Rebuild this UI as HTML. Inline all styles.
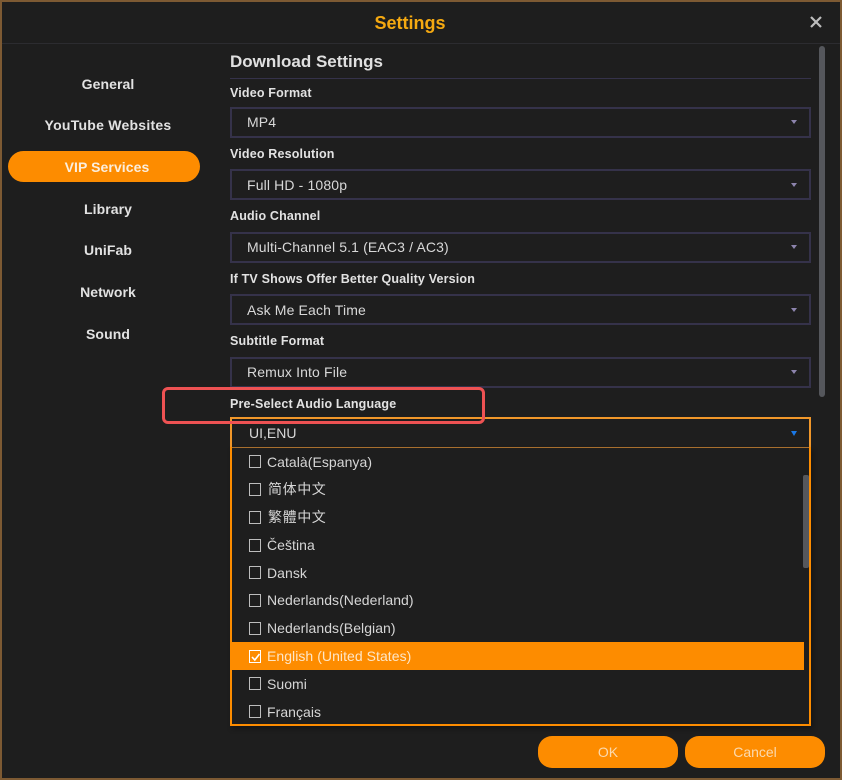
<!DOCTYPE html>
<html><head><meta charset="utf-8">
<style>
html,body{margin:0;padding:0;background:#1e1e1e}
body{width:842px;height:780px;position:relative;overflow:hidden;font-family:"Liberation Sans","Noto Sans CJK SC",sans-serif;color:#e0e0e0}
.a{position:absolute;white-space:nowrap}
.frame{left:0;top:0;width:838px;height:776px;border:2px solid #7d5a33}
.nav{left:12px;width:192px;text-align:center;font-weight:bold;font-size:14px;line-height:20px;color:#e2e2e2;letter-spacing:.08px}
.lab{left:230px;font-weight:bold;font-size:12.5px;line-height:16px;color:#e2e2e2;letter-spacing:.17px}
.sel{left:230px;width:577px;height:27px;border:2px solid #35324a}
.val{left:247px;font-size:14px;line-height:18px;color:#d8d8d8;letter-spacing:.14px}
.arr{left:791px;width:0;height:0;border-left:3.5px solid transparent;border-right:3.5px solid transparent;border-top:4px solid #8d84ad}
.cb{left:249px;width:10px;height:11px;border:1.5px solid #bdbdbd}
.it{left:267px;font-size:14px;line-height:18px;color:#d6d6d6;letter-spacing:.05px}
.cjk{left:268px;font-family:"WenQuanYi Zen Hei","Noto Sans CJK SC",sans-serif;letter-spacing:.6px}
.btn{top:736px;width:140px;height:32px;background:#fd8c00;border-radius:14px;text-align:center;font-size:14px;line-height:32px;color:#fbd9ae}
</style></head><body>
<div class="a frame"></div>
<div class="a" style="left:0;width:820px;top:12px;text-align:center;font-size:18px;line-height:22px;font-weight:bold;color:#f5a911">Settings</div>
<svg class="a" style="left:809px;top:15px" width="14" height="14" viewBox="0 0 14 14"><path d="M2 2L12 12M12 2L2 12" stroke="#bdbdbd" stroke-width="2.2" fill="none"/></svg>
<div class="a" style="left:2px;top:43px;width:838px;height:1px;background:#2c2c30"></div>

<div class="a nav" style="top:74px">General</div>
<div class="a nav" style="top:115px;letter-spacing:.25px">YouTube Websites</div>
<div class="a" style="left:8px;top:151px;width:192px;height:31px;background:#fd8c00;border-radius:16px"></div>
<div class="a nav" style="left:11px;top:157px;color:#fbeedd">VIP Services</div>
<div class="a nav" style="top:199px">Library</div>
<div class="a nav" style="top:240px">UniFab</div>
<div class="a nav" style="top:282px">Network</div>
<div class="a nav" style="top:324px">Sound</div>

<div class="a" style="left:230px;top:51px;font-size:17px;line-height:22px;font-weight:bold;color:#e0e0e0">Download Settings</div>
<div class="a" style="left:230px;top:78px;width:581px;height:1px;background:#35324a"></div>
<div class="a" style="left:819px;top:46px;width:6px;height:351px;background:#55575c;border-radius:3px"></div>

<div class="a lab" style="top:85px">Video Format</div>
<div class="a sel" style="top:107px"></div><div class="a val" style="top:113px">MP4</div><div class="a arr" style="top:120px"></div>
<div class="a lab" style="top:146px">Video Resolution</div>
<div class="a sel" style="top:169px"></div><div class="a val" style="top:176px">Full HD - 1080p</div><div class="a arr" style="top:183px"></div>
<div class="a lab" style="top:208px">Audio Channel</div>
<div class="a sel" style="top:232px"></div><div class="a val" style="top:238px">Multi-Channel 5.1 (EAC3 / AC3)</div><div class="a arr" style="top:245px"></div>
<div class="a lab" style="top:271px">If TV Shows Offer Better Quality Version</div>
<div class="a sel" style="top:294px"></div><div class="a val" style="top:301px">Ask Me Each Time</div><div class="a arr" style="top:308px"></div>
<div class="a lab" style="top:333px">Subtitle Format</div>
<div class="a sel" style="top:357px"></div><div class="a val" style="top:363px">Remux Into File</div><div class="a arr" style="top:370px"></div>
<div class="a lab" style="top:396px">Pre-Select Audio Language</div>

<div class="a" style="left:230px;top:417px;width:577px;height:28px;border:2px solid #f0972a;border-bottom:1px solid #a86f2e"></div>
<div class="a val" style="left:249px;top:424px;letter-spacing:0">UI,ENU</div>
<div class="a" style="left:791px;top:431px;width:0;height:0;border-left:3.5px solid transparent;border-right:3.5px solid transparent;border-top:5px solid #1a78e6"></div>
<div class="a" style="left:230px;top:447px;width:577px;height:277px;border:2px solid #fd8c00;border-top:0;box-shadow:2px 3px 5px rgba(0,0,0,.3)"></div>
<div class="a" style="left:803px;top:475px;width:6px;height:93px;background:#55575c;border-radius:2px"></div>
<div class="a" style="left:232px;top:642px;width:572px;height:28px;background:#fd8c00"></div>

<div class="a cb" style="top:455px"></div><div class="a it" style="top:453px">Català(Espanya)</div>
<div class="a cb" style="top:483px"></div><div class="a it cjk" style="top:480px">简体中文</div>
<div class="a cb" style="top:511px"></div><div class="a it cjk" style="top:508px">繁體中文</div>
<div class="a cb" style="top:539px"></div><div class="a it" style="top:536px">Čeština</div>
<div class="a cb" style="top:566px"></div><div class="a it" style="top:564px">Dansk</div>
<div class="a cb" style="top:594px"></div><div class="a it" style="top:591px">Nederlands(Nederland)</div>
<div class="a cb" style="top:622px"></div><div class="a it" style="top:619px">Nederlands(Belgian)</div>
<div class="a cb" style="top:650px;border-color:#fff"></div>
<svg class="a" style="left:249px;top:650px" width="14" height="14" viewBox="0 0 14 14"><path d="M3 7L5.8 10L10.5 4" stroke="#fff" stroke-width="1.6" fill="none"/></svg>
<div class="a it" style="top:647px;color:#fde6c8">English (United States)</div>
<div class="a cb" style="top:677px"></div><div class="a it" style="top:675px">Suomi</div>
<div class="a cb" style="top:705px"></div><div class="a it" style="top:703px">Français</div>

<div class="a btn" style="left:538px">OK</div>
<div class="a btn" style="left:685px">Cancel</div>

<div class="a" style="left:162px;top:387px;width:317px;height:31px;border:3px solid #ee5253;border-radius:6px"></div>
</body></html>
